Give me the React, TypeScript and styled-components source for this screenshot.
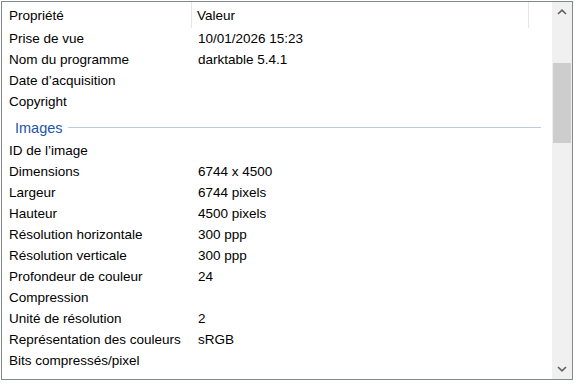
import styled, { createGlobalStyle } from "styled-components";

const GlobalStyle = createGlobalStyle`
  html, body {
    margin: 0;
    padding: 0;
    background: #ffffff;
  }
  body {
    font-family: "Liberation Sans", Arial, sans-serif;
  }
`;

const Frame = styled.div`
  margin: 1px 0 0 1px;
  width: 572px;
  height: 379px;
  box-sizing: border-box;
  border: 1px solid #828790;
  background: #fff;
  display: flex;
  overflow: hidden;
`;

const List = styled.div`
  flex: 1;
  display: flex;
  flex-direction: column;
  overflow: hidden;
`;

const Header = styled.div`
  height: 26px;
  flex-shrink: 0;
  display: grid;
  grid-template-columns: 190px 337px 1fr;
`;

const HeaderCell = styled.div<{ $pad: number }>`
  display: flex;
  align-items: center;
  padding-left: ${(p) => p.$pad}px;
  border-right: 1px solid #e5e5e5;
  font-size: 13.5px;
  color: #000;
  &:last-child {
    border-right: none;
  }
`;

const Row = styled.div`
  height: 21px;
  flex-shrink: 0;
  display: grid;
  grid-template-columns: 191px 1fr;
  align-items: center;
  font-size: 13.5px;
  color: #000;
  white-space: nowrap;
`;

const Name = styled.span`
  padding-left: 7px;
`;

const Value = styled.span`
  padding-left: 5px;
`;

const Group = styled.div`
  height: 28px;
  box-sizing: border-box;
  flex-shrink: 0;
  display: flex;
  align-items: center;
  padding: 3px 11px 0 13px;
  gap: 5px;
  font-size: 14.5px;
  color: #2355a5;
`;

const GroupLine = styled.div`
  flex: 1;
  height: 1px;
  background: #bccbdf;
`;

const ScrollBar = styled.div`
  width: 20px;
  flex-shrink: 0;
  background: #f0f0f0;
  display: flex;
  flex-direction: column;
`;

const ArrowButton = styled.div`
  height: 20px;
  display: flex;
  align-items: center;
  justify-content: center;
`;

const Track = styled.div`
  flex: 1;
  padding-top: 41px;
`;

const Thumb = styled.div`
  height: 80px;
  margin: 0 1px;
  background: #cdcdcd;
`;

const Chevron = ({ up }: { up?: boolean }) => (
  <svg width="10" height="6" viewBox="0 0 10 6">
    <polyline
      points={up ? "1,5 5,1.2 9,5" : "1,1 5,4.8 9,1"}
      fill="none"
      stroke="#606060"
      strokeWidth="1.6"
    />
  </svg>
);

const before: [string, string][] = [
  ["Prise de vue", "10/01/2026 15:23"],
  ["Nom du programme", "darktable 5.4.1"],
  ["Date d’acquisition", ""],
  ["Copyright", ""],
];

const images: [string, string][] = [
  ["ID de l’image", ""],
  ["Dimensions", "6744 x 4500"],
  ["Largeur", "6744 pixels"],
  ["Hauteur", "4500 pixels"],
  ["Résolution horizontale", "300 ppp"],
  ["Résolution verticale", "300 ppp"],
  ["Profondeur de couleur", "24"],
  ["Compression", ""],
  ["Unité de résolution", "2"],
  ["Représentation des couleurs", "sRGB"],
  ["Bits compressés/pixel", ""],
];

function App() {
  return (
    <>
      <GlobalStyle />
      <Frame>
        <List>
          <Header>
            <HeaderCell $pad={7}>Propriété</HeaderCell>
            <HeaderCell $pad={5}>Valeur</HeaderCell>
            <HeaderCell $pad={0} />
          </Header>
          {before.map(([k, v]) => (
            <Row key={k}>
              <Name>{k}</Name>
              <Value>{v}</Value>
            </Row>
          ))}
          <Group>
            Images
            <GroupLine />
          </Group>
          {images.map(([k, v]) => (
            <Row key={k}>
              <Name>{k}</Name>
              <Value>{v}</Value>
            </Row>
          ))}
        </List>
        <ScrollBar>
          <ArrowButton>
            <Chevron up />
          </ArrowButton>
          <Track>
            <Thumb />
          </Track>
          <ArrowButton>
            <Chevron />
          </ArrowButton>
        </ScrollBar>
      </Frame>
    </>
  );
}

export default App;
